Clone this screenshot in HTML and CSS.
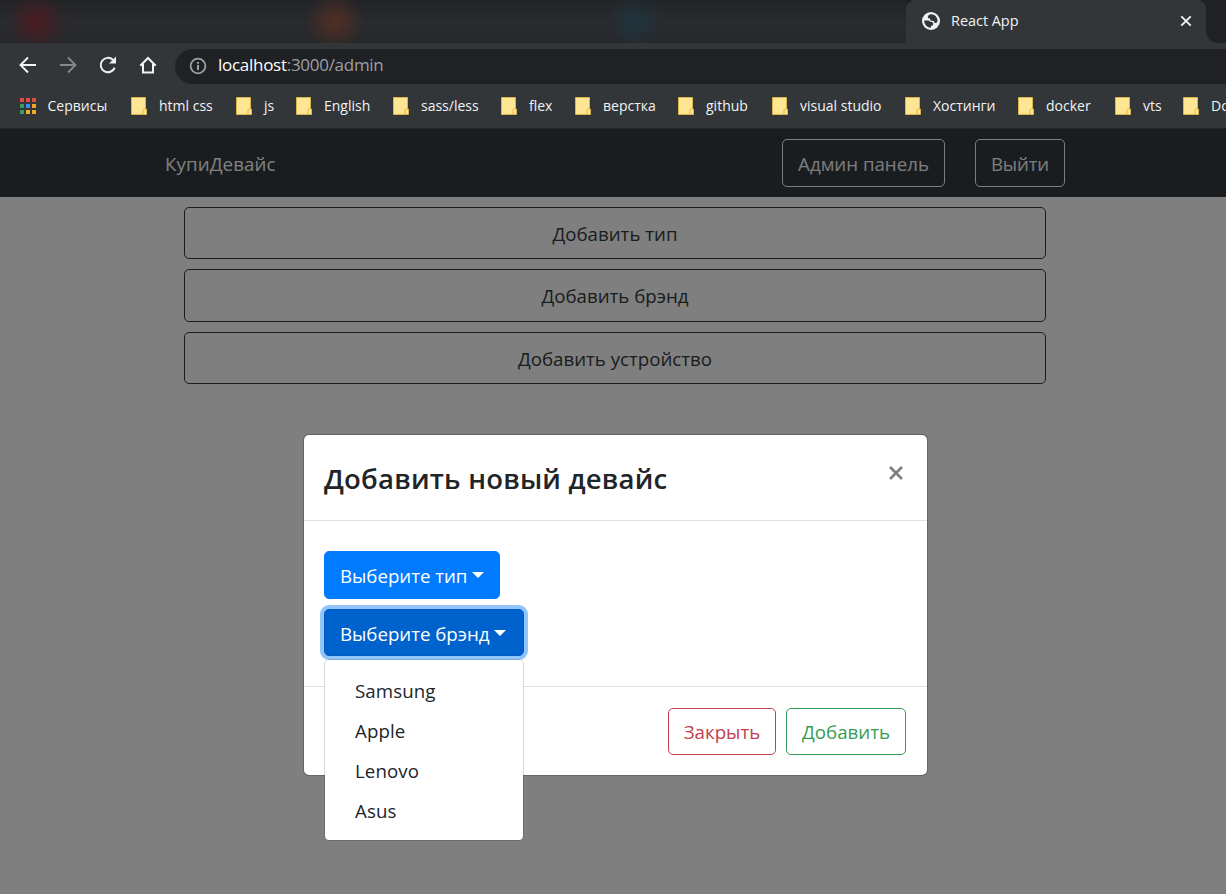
FILE: index.html
```html
<!DOCTYPE html>
<html lang="ru">
<head>
<meta charset="utf-8">
<title>React App</title>
<link rel="stylesheet" href="styles.css">
</head>
<body>
<svg class="defs" width="0" height="0">
  <symbol id="folder" viewBox="0 0 16 18">
    <path d="M.5.5h14v11.500h1v5.500h-15z" fill="#ffe694" stroke="#d9b44a"/>
    <path d="M12 17v-3.500q0-1.700 1.500-1.700h1.400" fill="none" stroke="#e0b93c" stroke-width="1"/>
  </symbol>
</svg>
<header class="browser">
  <div class="tabstrip">
    <div class="blurred"><i class="blob red"></i><i class="blob orange"></i><i class="blob teal"></i></div>
    <div class="tab">
      <svg class="favicon" viewBox="0 0 18 18"><circle cx="9" cy="9" r="9" fill="#f1f3f4"/><path d="M9 2.300C7.200 2.500 5.800 3.700 5.800 5c0 1.200 1 1.500 2.200 1.500 0 1.700.6 2.300 2.100 2.300 1.800 0 2.400.8 2.300 2.200 1.500 0 2.500-.4 3.200-1.500C15.800 5.500 13 2.300 9 2.300zM2.200 8.600c-.2 4 3 7.200 6.800 7.200v-1.900c1.500 0 2.300-.7 2.300-1.800 0-1.800-1.300-2.300-3-2.300-.7 0-.8-1.200-2-1.200z" fill="#323639"/></svg>
      <span class="tab-title">React App</span>
      <svg class="tab-close" viewBox="0 0 12 12"><path d="M1.300 1.300l9.400 9.400M10.700 1.300L1.300 10.700" stroke="#f1f3f4" stroke-width="1.900"/></svg>
    </div>
    <div class="strip-end"></div>
  </div>
  <div class="toolbar">
    <svg class="nav-icon" viewBox="0 0 20 20"><path d="M18 10H3M10 2.500L2.500 10l7.500 7.500" fill="none" stroke="#f1f3f4" stroke-width="1.900"/></svg>
    <svg class="nav-icon" viewBox="0 0 20 20"><path d="M2 10h15M10 2.500l7.500 7.500-7.500 7.500" fill="none" stroke="#85888b" stroke-width="1.900"/></svg>
    <svg class="nav-icon" viewBox="0 0 20 20"><path d="M16.700 12.600A7.200 7.200 0 1 1 15 4.900" fill="none" stroke="#f1f3f4" stroke-width="2"/><path d="M18 1.500v7h-7z" fill="#f1f3f4"/></svg>
    <svg class="nav-icon" viewBox="0 0 20 20"><path d="M2.300 10.800L10 3l7.700 7.800M5 9v8.500h10V9" fill="none" stroke="#f1f3f4" stroke-width="2"/></svg>
    <div class="omnibox">
      <svg class="info" viewBox="0 0 18 18"><circle cx="9" cy="9" r="7.400" fill="none" stroke="#9aa0a6" stroke-width="1.800"/><path d="M9 8v5M9 5v1.800" stroke="#9aa0a6" stroke-width="2"/></svg>
      <span class="url"><b>localhost</b>:3000/admin</span>
    </div>
  </div>
  <nav class="bookmarks">
    <a class="mark apps"><svg viewBox="0 0 16 16"><path d="M0 0h4v4H0zM6 0h4v4H6zM12 0h4v4h-4z" fill="#e5493f"/><path d="M0 6h4v4H0zM0 12h4v4H0z" fill="#34a05c"/><path d="M6 6h4v4H6z" fill="#3b8df0"/><path d="M12 6h4v4h-4zM6 12h4v4H6zM12 12h4v4h-4z" fill="#efab25"/></svg><span>Сервисы</span></a>
    <a class="mark"><svg><use href="#folder"/></svg><span>html css</span></a>
    <a class="mark"><svg><use href="#folder"/></svg><span>js</span></a>
    <a class="mark"><svg><use href="#folder"/></svg><span>English</span></a>
    <a class="mark"><svg><use href="#folder"/></svg><span>sass/less</span></a>
    <a class="mark"><svg><use href="#folder"/></svg><span>flex</span></a>
    <a class="mark"><svg><use href="#folder"/></svg><span>верстка</span></a>
    <a class="mark"><svg><use href="#folder"/></svg><span>github</span></a>
    <a class="mark"><svg><use href="#folder"/></svg><span>visual studio</span></a>
    <a class="mark"><svg><use href="#folder"/></svg><span>Хостинги</span></a>
    <a class="mark"><svg><use href="#folder"/></svg><span>docker</span></a>
    <a class="mark"><svg><use href="#folder"/></svg><span>vts</span></a>
    <a class="mark"><svg><use href="#folder"/></svg><span>Do</span></a>
  </nav>
</header>
<main class="page">
  <div class="navbar">
    <a class="brand">КупиДевайс</a>
    <button class="btn light admin">Админ панель</button>
    <button class="btn light logout">Выйти</button>
  </div>
  <div class="container">
    <button class="btn wide">Добавить тип</button>
    <button class="btn wide">Добавить брэнд</button>
    <button class="btn wide">Добавить устройство</button>
  </div>
  <div class="backdrop">
    <section class="modal">
      <div class="modal-header">
        <h2 class="modal-title">Добавить новый девайс</h2>
        <svg class="modal-close" viewBox="0 0 14 14"><path d="M1 1l12 12M13 1L1 13" stroke="#7f7f7f" stroke-width="2.700"/></svg>
      </div>
      <div class="modal-body">
        <button class="btn primary type">Выберите тип<i class="caret"></i></button>
        <div class="dropdown">
          <button class="btn primary active">Выберите брэнд<i class="caret"></i></button>
          <div class="menu">
            <a class="item samsung">Samsung</a>
            <a class="item apple">Apple</a>
            <a class="item lenovo">Lenovo</a>
            <a class="item asus">Asus</a>
          </div>
        </div>
      </div>
      <div class="modal-footer">
        <button class="btn danger">Закрыть</button>
        <button class="btn success">Добавить</button>
      </div>
    </section>
  </div>
</main>
</body>
</html>
```
FILE: styles.css
```css
* { box-sizing: border-box; }
body {
  margin: 0;
  width: 1226px;
  height: 894px;
  overflow: hidden;
  display: flex;
  flex-direction: column;
  font-family: "Open Sans", "Noto Sans", sans-serif;
  background: #fff;
}
.defs { position: absolute; }
.browser { height: 129px; background: #323639; flex: none; border-bottom: 1px solid #24282b; }
.tabstrip { height: 43px; display: flex; background: #202124; }
.blurred {
  width: 906px;
  display: flex;
  align-items: center;
  overflow: hidden;
  background: linear-gradient(#222326, #2a2b2e 55%, #26272a);
}
.blob { width: 60px; height: 60px; flex: none; }
.red { margin-left: 7px; background: radial-gradient(closest-side, #4b1c22, #4b1c2200); }
.orange { margin-left: 238px; background: radial-gradient(closest-side, #522e24, #522e2400); }
.teal { margin-left: 240px; background: radial-gradient(closest-side, #1f343d, #1f343d00); }
.tab {
  width: 300px;
  display: flex;
  align-items: center;
  padding: 0 14px 1px 16px;
  background: #323639;
  border-radius: 9px 9px 0 0;
}
.favicon { width: 18px; height: 18px; }
.tab-title { margin: -2px 0 0 11px; flex: 1; font-size: 14.500px; color: #f1f3f4; letter-spacing: -.05px; }
.tab-close { width: 12px; height: 12px; }
.strip-end { flex: 1; background: #323639; }
.strip-end::before { content: ""; display: block; height: 43px; background: #202124; border-bottom-left-radius: 12px; }
.toolbar { height: 44px; display: flex; align-items: center; padding-left: 17.500px; gap: 20px; }
.nav-icon { width: 20px; height: 20px; flex: none; }
.omnibox {
  flex: 1;
  height: 35px;
  margin: 2px 0 0 -2.500px;
  display: flex;
  align-items: center;
  padding-left: 14px;
  background: #202124;
  border-radius: 18px 0 0 18px;
}
.info { width: 18px; height: 18px; margin-right: 11px; }
.url { margin-top: -3px; font-size: 17px; color: #9aa0a6; letter-spacing: -.28px; }
.url b { font-weight: 400; color: #fff; }
.bookmarks {
  height: 39px;
  display: grid;
  grid-template-columns: 111px 105px 60px 97px 108px 74px 103px 94px 133px 113px 97px 68px 60px;
  align-items: center;
  padding: 0 0 1px 20px;
  overflow: hidden;
}
.mark { display: flex; align-items: center; gap: 12px; font-size: 14px; color: #f1f3f4; white-space: nowrap; letter-spacing: 0; }
.mark span { margin-top: -1px; }
.apps { gap: 11.500px; }
.mark svg { width: 16px; height: 18px; flex: none; }
.page { position: relative; flex: 1; }
.navbar { height: 68px; display: flex; align-items: center; padding: 0 161px 0 165px; background: #343a40; }
.brand { flex: 1; color: #fff; font-size: 18.700px; letter-spacing: .12px; }
.btn {
  height: 48px;
  display: block;
  padding: 0;
  text-align: center;
  font: 18.700px "Open Sans", "Noto Sans", sans-serif;
  letter-spacing: 0;
  white-space: nowrap;
  border: 1px solid;
  border-radius: 5px;
  background: none;
}
.light { color: #f8f9fa; }
.admin { width: 163px; }
.logout { width: 90px; margin-left: 30px; letter-spacing: -.2px; }
.container { padding: 10px 180px 0 184px; display: grid; grid-template-rows: 52px 53px 52px; gap: 10px; }
.wide { height: auto; color: #343a40; }
.backdrop { position: absolute; inset: 0; background: rgba(0, 0, 0, .5); padding: 305px 0 0 303px; }
.modal {
  width: 625px;
  height: 342px;
  display: flex;
  flex-direction: column;
  background: #fff;
  background-clip: padding-box;
  border: 1px solid rgba(0, 0, 0, .2);
  border-radius: 6px;
}
.modal-header { height: 86px; display: flex; padding: 0 24px 0 20px; border-bottom: 1px solid #dee2e6; }
.modal-title { flex: 1; margin: 0; font-size: 27.500px; line-height: 87px; font-weight: 600; letter-spacing: .2px; color: #212529; white-space: nowrap; }
.modal-close { width: 14px; height: 14px; margin-top: 31px; }
.modal-body { height: 165px; padding: 30px 20px; display: flex; flex-direction: column; gap: 10px; }
.primary { color: #fff; background: #007bff; border-color: #007bff; text-align: left; padding-left: 15px; letter-spacing: -.03px; }
.type { width: 176px; }
.dropdown { position: relative; width: 200px; }
.active { width: 200px; height: 47px; padding-top: 1px; background: #0062cc; border-color: #005cbf; box-shadow: 0 0 0 4px #93c5fd; }
.caret { display: inline-block; margin-left: 5px; vertical-align: 5px; border: 6px solid transparent; border-top-color: #fff; border-bottom: 0; }
.menu {
  position: absolute;
  top: 50px;
  left: 0;
  width: 200px;
  height: 182px;
  padding: 11px 0;
  background: #fff;
  background-clip: padding-box;
  border: 1px solid rgba(0, 0, 0, .15);
  border-radius: 5px;
}
.item { display: block; height: 40px; line-height: 40px; padding-left: 30px; font-size: 18.700px; letter-spacing: .1px; color: #212529; }
.modal-footer { flex: 1; display: flex; justify-content: flex-end; align-items: center; gap: 10px; padding: 1px 21px 0; border-top: 1px solid #dee2e6; }
.danger { width: 108px; height: 47px; color: #c3414c; }
.success { width: 120px; height: 47px; color: #379d54; }
```
